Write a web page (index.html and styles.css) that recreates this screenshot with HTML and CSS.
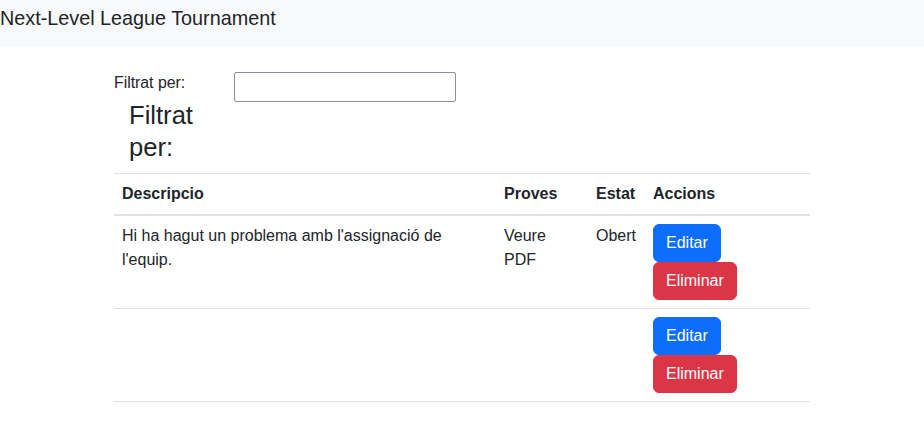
FILE: index.html
```html
<!DOCTYPE html>
<html lang="ca">
<head>
<meta charset="utf-8">
<title>Next-Level League Tournament</title>
<link rel="stylesheet" href="styles.css">
</head>
<body>
<nav class="navbar">
  <span class="brand">Next-Level League Tournament</span>
</nav>
<main class="container">
  <div class="filter-row">
    <label class="filter-label" for="filtre">Filtrat per:</label>
    <input id="filtre" class="filter-input" type="text">
  </div>
  <h3 class="filter-title">Filtrat per:</h3>
  <table class="table">
    <thead>
      <tr>
        <th class="col-desc">Descripcio</th>
        <th class="col-proves">Proves</th>
        <th class="col-estat">Estat</th>
        <th class="col-accions">Accions</th>
      </tr>
    </thead>
    <tbody>
      <tr>
        <td>Hi ha hagut un problema amb l'assignació de l'equip.</td>
        <td>Veure PDF</td>
        <td>Obert</td>
        <td>
          <button class="btn btn-primary">Editar</button><br>
          <button class="btn btn-danger">Eliminar</button>
        </td>
      </tr>
      <tr>
        <td></td>
        <td></td>
        <td></td>
        <td>
          <button class="btn btn-primary">Editar</button><br>
          <button class="btn btn-danger">Eliminar</button>
        </td>
      </tr>
    </tbody>
  </table>
</main>
</body>
</html>
```
FILE: styles.css
```css
* { box-sizing: border-box; }
body {
  margin: 0;
  font-family: "Liberation Sans", Arial, sans-serif;
  font-size: 16px;
  line-height: 1.5;
  color: #212529;
  background: #fff;
}
.navbar {
  background: #f8f9fa;
  height: 47px;
  padding-top: 3px;
}
.brand {
  display: block;
  font-size: 19.8px;
  line-height: 30px;
  color: #212529;
}
.container {
  width: 720px;
  margin: 0 auto;
  padding: 25px 12px 0;
}
.filter-row {
  display: flex;
  align-items: flex-start;
}
.filter-label {
  width: 120px;
  font-size: 15.8px;
  line-height: 24px;
  margin-top: -1px;
}
.filter-input {
  width: 222px;
  height: 30px;
  border: 1px solid #8f8f9d;
  border-radius: 2px;
  padding: 2px 4px;
  font: inherit;
}
.filter-title {
  margin: -3px 0 10px;
  padding-left: 15px;
  width: 100px;
  font-size: 25.6px;
  font-weight: 500;
  line-height: 32px;
}
.table {
  width: 100%;
  border-collapse: collapse;
  border-top: 1px solid #dee2e6;
}
.table th, .table td {
  padding: 8px;
  text-align: left;
  vertical-align: top;
  border-bottom: 1px solid #dee2e6;
}
.table thead th {
  font-weight: 700;
  border-bottom: 2px solid #dee2e6;
}
.col-desc { width: 382px; }
.col-proves { width: 92px; }
.col-estat { width: 57px; }
.btn {
  display: inline-block;
  font: inherit;
  font-size: 16px;
  line-height: 24px;
  padding: 6px 12px;
  border: 1px solid transparent;
  border-radius: 6px;
  color: #fff;
  cursor: pointer;
  vertical-align: top;
}
.btn-primary { background: #0d6efd; border-color: #0d6efd; }
.btn-danger { background: #dc3545; border-color: #dc3545; }
```
